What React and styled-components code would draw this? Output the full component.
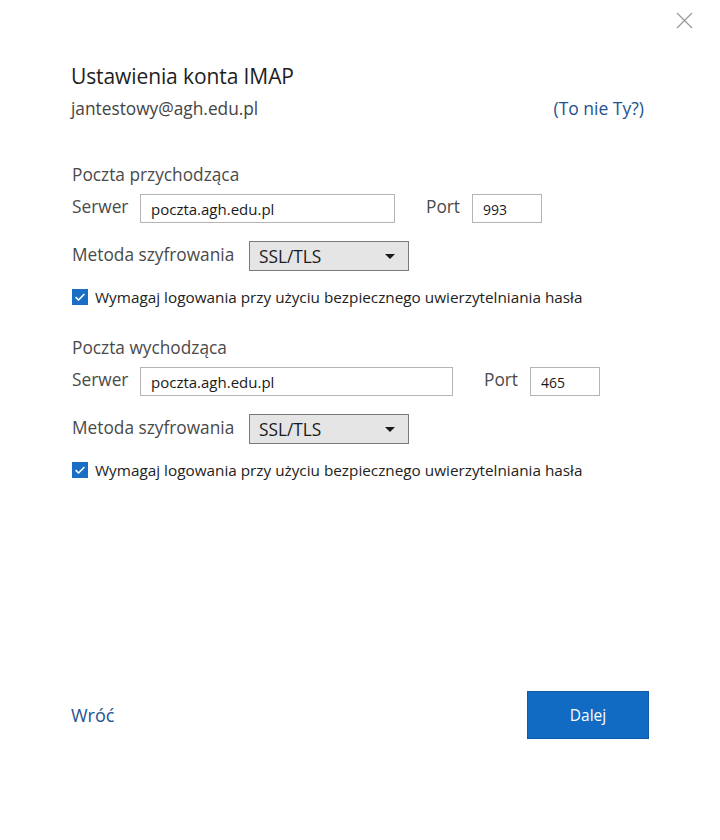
import styled, { createGlobalStyle } from "styled-components";

const GlobalStyle = createGlobalStyle`
    html, body {
        margin: 0;
        padding: 0;
        background: #ffffff;
        font-family: "Open Sans", "Noto Sans", sans-serif;
    }
`

const sections = [
    { title: "Poczta przychodząca", server: "poczta.agh.edu.pl", serverWidth: 255, port: "993" },
    { title: "Poczta wychodząca", server: "poczta.agh.edu.pl", serverWidth: 313, port: "465" },
];

const CloseIcon = () => (
    <svg width="17" height="17" viewBox="0 0 17 17">
        <path d="M1 1 L16 16 M16 1 L1 16" stroke="#9a9a9a" strokeWidth="1.3" fill="none" />
    </svg>
);

const CheckIcon = () => (
    <svg width="16" height="16" viewBox="0 0 16 16">
        <rect x="0" y="0" width="16" height="16" fill="#1a6fc5" />
        <path d="M3.6 8.2 L6.6 11 L12.4 5" stroke="#ffffff" strokeWidth="1.6" fill="none" />
    </svg>
);

const App = () => {
    return (
        <Dialog>
            <GlobalStyle />

            {/* Close */}
            <CloseButton aria-label="Zamknij">
                <CloseIcon />
            </CloseButton>

            {/* Header */}
            <Title>Ustawienia konta IMAP</Title>
            <AccountRow>
                <Email>jantestowy@agh.edu.pl</Email>
                <Link href="#">(To nie Ty?)</Link>
            </AccountRow>

            {/* Server sections */}
            {sections.map((section, index) => (
                <Section key={section.title} $first={index === 0}>
                    <SectionTitle>{section.title}</SectionTitle>

                    <FieldRow>
                        <Label $width={68}>Serwer</Label>
                        <TextInput $width={section.serverWidth} defaultValue={section.server} />
                        <PortLabel>Port</PortLabel>
                        <PortInput defaultValue={section.port} />
                    </FieldRow>

                    <SelectRow>
                        <Label $width={177}>Metoda szyfrowania</Label>
                        <Select>
                            <span>SSL/TLS</span>
                            <Arrow />
                        </Select>
                    </SelectRow>

                    <CheckRow>
                        <CheckIcon />
                        <CheckText>Wymagaj logowania przy użyciu bezpiecznego uwierzytelniania hasła</CheckText>
                    </CheckRow>
                </Section>
            ))}

            {/* Footer */}
            <Footer>
                <Link href="#" $large>Wróć</Link>
                <PrimaryButton>Dalej</PrimaryButton>
            </Footer>
        </Dialog>
    )
}

const Dialog = styled.div`
    position: relative;
    box-sizing: border-box;
    width: 720px;
    height: 840px;
    padding: 62px 71px 101px 71px;
    display: flex;
    flex-direction: column;
    color: #444;
`

const CloseButton = styled.button`
    position: absolute;
    top: 12px;
    right: 27px;
    padding: 0;
    border: none;
    background: none;
    display: flex;
`

const Title = styled.h1`
    margin: 0;
    height: 28px;
    line-height: 28px;
    font-size: 21px;
    font-weight: normal;
    color: #1e1e1e;
    letter-spacing: -0.1px;
`

const AccountRow = styled.div`
    margin-top: 6px;
    margin-right: 5px;
    height: 24px;
    display: flex;
    align-items: center;
    justify-content: space-between;
`

const Email = styled.span`
    font-size: 17.3px;
    color: #444;
`

const Link = styled.a`
    font-size: ${props => props.$large ? "18px" : "17.5px"};
    color: #24528f;
    text-decoration: none;
`

const Section = styled.section`
    margin-top: ${props => props.$first ? "43px" : "31px"};
    display: flex;
    flex-direction: column;
`

const SectionTitle = styled.h2`
    margin: 0 0 0 1px;
    height: 24px;
    line-height: 24px;
    font-size: 17.3px;
    font-weight: normal;
    color: #4a4a4a;
`

const FieldRow = styled.div`
    margin-top: 6px;
    height: 30px;
    display: flex;
    align-items: center;
`

const SelectRow = styled(FieldRow)`
    margin-top: 18px;
`

const Label = styled.span`
    width: ${props => props.$width}px;
    padding-left: 1px;
    font-size: 17.3px;
    color: #4a4a4a;
    margin-top: -3px;
`

const TextInput = styled.input`
    box-sizing: border-box;
    width: ${props => props.$width}px;
    height: 29px;
    padding: 2px 10px 0;
    border: 1px solid #b4b4b4;
    font-family: inherit;
    font-size: 15px;
    color: #1a1a1a;
    outline: none;
`

const PortLabel = styled.span`
    margin: -3px 12px 0 31px;
    font-size: 17.3px;
    color: #4a4a4a;
`

const PortInput = styled(TextInput)`
    width: 70px;
    font-size: 14px;
`

const Select = styled.div`
    box-sizing: border-box;
    width: 160px;
    height: 30px;
    padding: 0 13px 0 9px;
    border: 1px solid #7a7a7a;
    background: #e5e5e5;
    display: flex;
    align-items: center;
    justify-content: space-between;
    font-size: 17.3px;
    color: #1a1a1a;
`

const Arrow = styled.span`
    width: 0;
    height: 0;
    border-left: 5px solid transparent;
    border-right: 5px solid transparent;
    border-top: 5px solid #1a1a1a;
`

const CheckRow = styled.label`
    margin-top: 18px;
    margin-left: 1px;
    height: 16px;
    display: flex;
    align-items: center;
    gap: 7px;
`

const CheckText = styled.span`
    font-size: 15.3px;
    color: #222;
`

const Footer = styled.footer`
    margin-top: auto;
    display: flex;
    align-items: center;
    justify-content: space-between;
`

const PrimaryButton = styled.button`
    width: 122px;
    height: 48px;
    border: 1px solid #0e5aa6;
    background: #126bc2;
    color: #ffffff;
    font-family: inherit;
    font-size: 15.5px;
`

export default App;
